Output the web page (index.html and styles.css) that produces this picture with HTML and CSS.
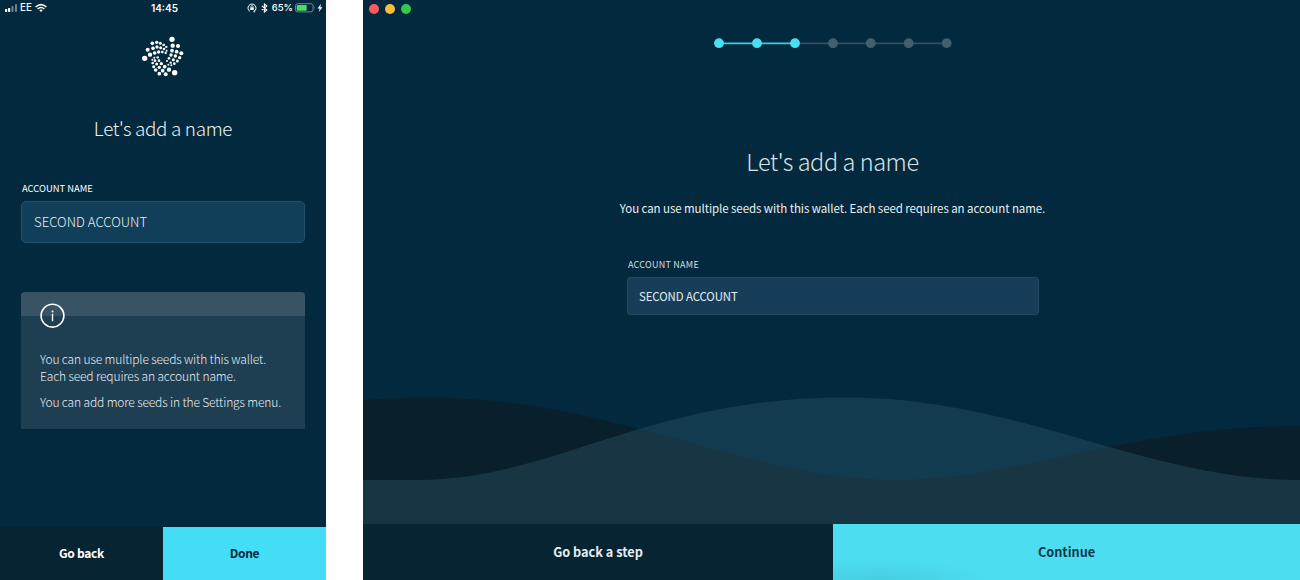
FILE: index.html
```html
<!DOCTYPE html>
<html lang="en">
<head>
<meta charset="utf-8">
<title>Let's add a name</title>
<link rel="stylesheet" href="styles.css">
</head>
<body>
<main class="screens">
<section class="phone">
  <header class="status">
    <div class="status-left">
      <svg width="13" height="10" viewBox="0 0 13 10"><g fill="#fff"><rect x="0" y="6" width="2.2" height="3" rx=".7"/><rect x="3" y="5" width="2.2" height="4" rx=".7"/></g><g fill="#6d8490"><rect x="6.5" y="3" width="2" height="6" rx=".7"/><rect x="10" y="1" width="2" height="8" rx=".7"/></g></svg>
      <span class="carrier">EE</span>
      <svg width="12" height="10" viewBox="0 0 12 10" fill="none" stroke="#fff" stroke-width="1.6"><path d="M.6 4Q6-.8 11.4 4M2.6 6Q6 3 9.4 6"/><path d="M4.3 7.2Q6 5.9 7.7 7.2L6 9Z" fill="#fff" stroke="none"/></svg>
    </div>
    <span class="clock">14:45</span>
    <div class="status-right">
      <svg width="10" height="10" viewBox="0 0 10 10" fill="none" stroke="#fff"><path d="M3 8.5A4 4 0 1 1 7 8.5"/><path d="M7.8 7.2L6.6 8.8L8.2 9" stroke-width=".8"/><rect x="3.2" y="4.4" width="3.6" height="2.6" fill="#fff" stroke="none"/><path d="M3.9 4.6V3.7A1.1 1.1 0 0 1 6.1 3.7V4.6" stroke-width=".8"/></svg>
      <svg class="bluetooth" width="7" height="10" viewBox="0 0 7 10" fill="none" stroke="#fff" stroke-width="1.1"><path d="M.8 2.8L5.8 7L3.4 9V1L5.8 3L.8 7.2"/></svg>
      <span class="percent">65%</span>
      <svg class="battery" width="21" height="10" viewBox="0 0 21 10"><rect x=".5" y=".7" width="17.5" height="8.2" rx="2" fill="none" stroke="#71848e"/><rect x="1.7" y="1.9" width="10" height="5.8" rx=".8" fill="#4cdb60"/><path d="M19 3.3Q20.6 4.8 19 6.3Z" fill="#71848e"/></svg>
      <svg width="6" height="10" viewBox="0 0 6 10"><path d="M4 .8L.6 5.4H2.7L1.8 9L5.4 4.2H3.3Z" fill="#fff"/></svg>
    </div>
  </header>
  <svg class="logo" width="66" height="54" viewBox="0 0 198 162" fill="#fff">
    <circle cx="44" cy="85" r="8"/><circle cx="53" cy="59" r="6"/><circle cx="60" cy="74" r="6.5"/><circle cx="67" cy="40" r="5.5"/><circle cx="69" cy="55" r="5.5"/><circle cx="74" cy="69" r="5.5"/><circle cx="80" cy="37" r="5"/><circle cx="81" cy="51" r="5"/><circle cx="86" cy="66" r="5"/><circle cx="91" cy="40" r="4.5"/><circle cx="92" cy="53" r="4.5"/><circle cx="97" cy="66" r="4"/><circle cx="101" cy="45" r="4"/><circle cx="102" cy="57" r="4"/><circle cx="107" cy="69" r="3.5"/><circle cx="109" cy="51" r="3.5"/><circle cx="110" cy="62" r="3"/>
    <circle cx="126" cy="28" r="8"/><circle cx="128" cy="47" r="6.5"/><circle cx="144" cy="48" r="6"/><circle cx="126" cy="62" r="5.5"/><circle cx="140" cy="65" r="5.5"/><circle cx="154" cy="70" r="6"/><circle cx="123" cy="75" r="5"/><circle cx="136" cy="78" r="5"/><circle cx="149" cy="83" r="5"/><circle cx="117" cy="85" r="4"/><circle cx="130" cy="89" r="4.5"/><circle cx="142" cy="93" r="4.5"/><circle cx="111" cy="93" r="3"/><circle cx="122" cy="98" r="3.5"/><circle cx="133" cy="101" r="4"/><circle cx="115" cy="104" r="3"/><circle cx="124" cy="106" r="3"/>
    <circle cx="134" cy="128" r="8"/><circle cx="117" cy="119" r="6.5"/><circle cx="107" cy="133" r="6"/><circle cx="104" cy="110" r="5.5"/><circle cx="98" cy="122" r="5.5"/><circle cx="88" cy="131" r="5.5"/><circle cx="94" cy="101" r="5"/><circle cx="88" cy="112" r="5"/><circle cx="77" cy="120" r="5.5"/><circle cx="87" cy="92" r="4"/><circle cx="80" cy="102" r="4.5"/><circle cx="71" cy="110" r="4.5"/><circle cx="83" cy="82" r="3.5"/><circle cx="75" cy="92" r="4"/><circle cx="68" cy="99" r="4"/><circle cx="73" cy="83" r="3"/><circle cx="67" cy="89" r="3"/>
  </svg>
  <h1 class="phone-title">Let's add a name</h1>
  <label class="phone-label">ACCOUNT NAME</label>
  <div class="phone-field">SECOND ACCOUNT</div>
  <div class="info">
    <div class="info-head"><svg class="info-icon" width="26" height="26" viewBox="0 0 26 26"><circle cx="12.5" cy="12.7" r="11.4" fill="none" stroke="#fff" stroke-width="1.6"/><circle cx="12.5" cy="8.4" r="1" fill="#fff"/><path d="M12.5 10.8V18.3" stroke="#fff" stroke-width="1.4"/></svg></div>
    <div class="info-text">
      <p class="info-line">You can use multiple seeds with this wallet.</p>
      <p class="info-line">Each seed requires an account name.</p>
      <p class="info-line third">You can add more seeds in the Settings menu.</p>
    </div>
  </div>
  <footer class="phone-actions"><div class="back">Go back</div><div class="done">Done</div></footer>
</section>
<section class="desktop">
  <div class="window-buttons"><i class="dot red"></i><i class="dot yellow"></i><i class="dot green"></i></div>
  <svg class="steps" width="240" height="12" viewBox="0 0 240 12">
    <path d="M82 6.3H234" stroke="#35505f" stroke-width="1.7"/><path d="M6 6.3H82" stroke="#3ccfe3" stroke-width="1.7"/>
    <g fill="#4adef1"><circle cx="6" cy="6.2" r="4.9"/><circle cx="44" cy="6.2" r="4.9"/><circle cx="82" cy="6.2" r="4.9"/></g>
    <g fill="#425f6f"><circle cx="120" cy="6.2" r="4.9"/><circle cx="157.8" cy="6.2" r="4.9"/><circle cx="195.7" cy="6.2" r="4.9"/><circle cx="233.7" cy="6.2" r="4.9"/></g>
  </svg>
  <h1 class="desk-title">Let's add a name</h1>
  <p class="desk-text">You can use multiple seeds with this wallet. Each seed requires an account name.</p>
  <div class="form"><label class="desk-label">ACCOUNT NAME</label><div class="desk-field">SECOND ACCOUNT</div></div>
  <svg class="waves" width="937" height="134" viewBox="0 0 937 134">
    <path fill="#09202c" d="M0 10Q35 7.5 65 7.5C250 7.5 385 90 530 90C660 90 760 36 937 36V134H0Z"/>
    <path fill="#3d6c7d" fill-opacity=".28" d="M0 90H55C190 90 285 7.5 482 7.5C660 7.5 780 90 937 90V134H0Z"/>
  </svg>
  <footer class="desk-actions"><div class="desk-back">Go back a step</div><div class="continue">Continue</div></footer>
</section>
</main>
</body>
</html>
```
FILE: styles.css
```css
* { box-sizing: border-box; }
body { margin: 0; background: #fff; font-family: "Noto Sans CJK SC", "Noto Sans", sans-serif; color: #fff; }
h1, p { margin: 0; white-space: nowrap; }
svg { display: block; flex: none; }
.screens { display: flex; gap: 37px; width: 1300px; height: 580px; overflow: hidden; }
.phone { width: 326px; height: 580px; background: #03293e; display: flex; flex-direction: column; }
.status { display: grid; grid-template-columns: 1fr auto 1fr; height: 16px; align-items: center; padding: 0 3px 0 5px; font: 500 10px/16px Inter, sans-serif; }
.status-left, .status-right { display: flex; align-items: center; height: 16px; }
.carrier { margin: 0 3px 0 2px; font-size: 9.8px; }
.clock { font-weight: 600; font-size: 10px; padding-left: 1px; }
.status-right { justify-content: flex-end; }
.bluetooth { margin: 0 4px 0 4px; }
.percent { font-size: 9.5px; }
.battery { margin: 0 1px 0 2px; }
.logo { margin: 14px 0 0 130px; }
.phone-title { margin-top: 29px; height: 30px; font-size: 18.8px; line-height: 30px; font-weight: 300; text-align: center; letter-spacing: -.3px; color: #eef2f5; }
.phone-label { margin: 36px 0 0 22px; height: 18px; font-size: 9.4px; line-height: 18px; }
.phone-field { margin: 4px 21px 0; height: 42px; flex: none; border: 1px solid #23506a; border-radius: 5px; background: #113e58; padding-left: 12px; font-size: 13.2px; line-height: 39px; font-weight: 300; color: #e8f1f6; }
.info { margin: 49px 21px 0; height: 137px; border-radius: 4px 4px 1px 1px; background: #1e3f52; overflow: hidden; }
.info-head { height: 24px; background: #385364; padding: 11px 0 0 19px; }
.info-text { padding: 34px 0 0 19px; font-size: 12px; font-weight: 300; letter-spacing: -.14px; color: #e6edf2; }
.info-line { line-height: 17px; }
.info-icon { position: relative; }
.third { margin-top: 9px; }
.phone-actions { margin-top: auto; height: 53px; display: grid; grid-template-columns: 163px 163px; font-size: 12px; line-height: 52px; text-align: center; font-weight: 700; letter-spacing: -.3px; }
.back { background: #072432; }
.done { background: #43ddf6; color: #03293e; }
.desktop { width: 937px; height: 580px; background: #03293e; display: flex; flex-direction: column; }
.window-buttons { display: flex; gap: 6px; height: 17px; padding: 4px 0 0 6px; }
.dot { width: 10px; height: 10px; border-radius: 50%; }
.red { background: #fb5c5b; }
.yellow { background: #fbbd3e; }
.green { background: #33c949; }
.steps { margin: 20px 0 0 350px; }
.desk-title { margin-top: 94px; height: 36px; padding-left: 2px; line-height: 36px; font-size: 23.5px; font-weight: 300; text-align: center; letter-spacing: -.42px; color: #d9e1e5; }
.desk-text { margin-top: 19px; height: 20px; padding-left: 2px; line-height: 20px; font-size: 11.5px; text-align: center; letter-spacing: -.08px; color: #e9eff2; }
.form { display: flex; flex-direction: column; margin: 39px 0 0 264px; width: 412px; }
.desk-label { height: 16px; padding-left: 1px; font-size: 9px; line-height: 16px; letter-spacing: .25px; color: #d3dee4; }
.desk-field { margin-top: 4px; height: 38px; border: 1px solid #24495f; border-radius: 3px; background: #163e58; padding-left: 11px; font-size: 11.4px; line-height: 36px; letter-spacing: -.08px; color: #e4edf2; }
.waves { margin-top: auto; }
.desk-actions { display: grid; grid-template-columns: 470px 467px; height: 56px; line-height: 56px; font-size: 12.7px; font-weight: 700; text-align: center; border-bottom: 1px solid #17323e; }
.desk-back { background: #062431; color: #e5edf1; }
.continue { background: radial-gradient(ellipse 110px 20px at 45px 56px, #46cee0, #4cddf1); color: #06384a; }
```
